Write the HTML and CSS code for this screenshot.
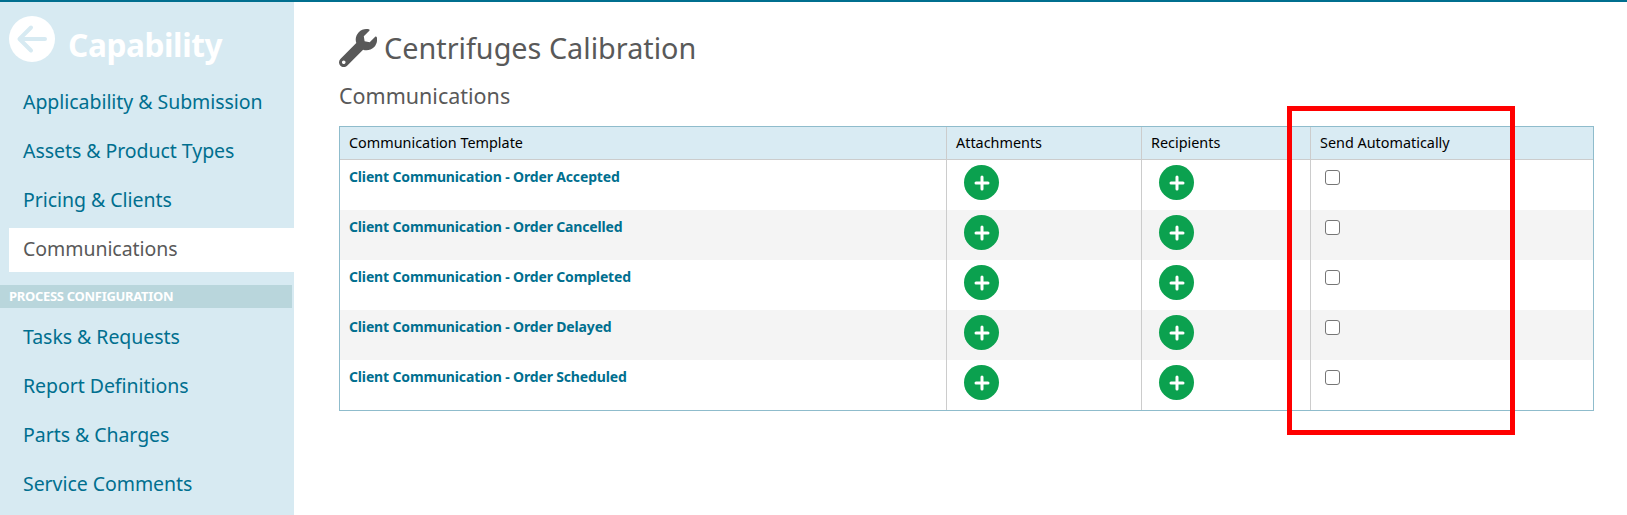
FILE: index.html
```html
<!DOCTYPE html>
<html lang="en">
<head>
<meta charset="utf-8">
<title>Centrifuges Calibration</title>
<link rel="stylesheet" href="styles.css">
</head>
<body>
<div class="layout">
  <aside class="sidebar">
    <div class="brand">
      <span class="back"><svg viewBox="0 0 46 46" width="46" height="46"><path d="M36 23H11M22 11.500 10.500 23 22 34.500" fill="none" stroke="#d7eaf2" stroke-width="4" stroke-linecap="round" stroke-linejoin="round"/></svg></span>
      <span class="brand-name">Capability</span>
    </div>
    <nav class="nav">
      <a class="nav-item">Applicability &amp; Submission</a>
      <a class="nav-item">Assets &amp; Product Types</a>
      <a class="nav-item">Pricing &amp; Clients</a>
      <a class="nav-item active">Communications</a>
      <div class="nav-section">PROCESS CONFIGURATION</div>
      <a class="nav-item">Tasks &amp; Requests</a>
      <a class="nav-item">Report Definitions</a>
      <a class="nav-item">Parts &amp; Charges</a>
      <a class="nav-item">Service Comments</a>
    </nav>
  </aside>
  <main class="main">
    <h1 class="title">
      <svg class="wrench" viewBox="0 0 512 512" width="38" height="38"><path fill="#595959" d="M507.700 109.100c-2.200-9-13.500-12.100-20.100-5.500l-74.400 74.400-67.900-11.300-11.300-67.900 74.400-74.400c6.600-6.600 3.400-17.900-5.700-20.200-47.400-11.700-99.500 1-136.500 38-39.600 39.600-50.500 96.900-33.500 146.500L18.700 404.700c-25 25-25 65.500 0 90.500s65.500 25 90.500 0l215.300-215.300c49.700 16.600 106.900 5.700 146.300-33.700 37.100-37.100 49.800-89.300 37.900-137.100zM64 472c-13.300 0-24-10.700-24-24 0-13.300 10.700-24 24-24s24 10.700 24 24c0 13.300-10.700 24-24 24z"/></svg>
      <span>Centrifuges Calibration</span>
    </h1>
    <h2 class="subtitle">Communications</h2>
    <table class="grid">
      <colgroup><col class="c1"><col class="c2"><col class="c3"><col class="c4"></colgroup>
      <thead>
        <tr><th>Communication Template</th><th>Attachments</th><th>Recipients</th><th>Send Automatically</th></tr>
      </thead>
      <tbody>
        <tr>
          <td><a class="link">Client Communication - Order Accepted</a></td>
          <td><span class="add"><svg viewBox="0 0 16 16" width="16" height="16"><path d="M8 2v12M2 8h12" stroke="#fff" stroke-width="3" stroke-linecap="round"/></svg></span></td>
          <td><span class="add"><svg viewBox="0 0 16 16" width="16" height="16"><path d="M8 2v12M2 8h12" stroke="#fff" stroke-width="3" stroke-linecap="round"/></svg></span></td>
          <td><input class="check" type="checkbox"></td>
        </tr>
        <tr>
          <td><a class="link">Client Communication - Order Cancelled</a></td>
          <td><span class="add"><svg viewBox="0 0 16 16" width="16" height="16"><path d="M8 2v12M2 8h12" stroke="#fff" stroke-width="3" stroke-linecap="round"/></svg></span></td>
          <td><span class="add"><svg viewBox="0 0 16 16" width="16" height="16"><path d="M8 2v12M2 8h12" stroke="#fff" stroke-width="3" stroke-linecap="round"/></svg></span></td>
          <td><input class="check" type="checkbox"></td>
        </tr>
        <tr>
          <td><a class="link">Client Communication - Order Completed</a></td>
          <td><span class="add"><svg viewBox="0 0 16 16" width="16" height="16"><path d="M8 2v12M2 8h12" stroke="#fff" stroke-width="3" stroke-linecap="round"/></svg></span></td>
          <td><span class="add"><svg viewBox="0 0 16 16" width="16" height="16"><path d="M8 2v12M2 8h12" stroke="#fff" stroke-width="3" stroke-linecap="round"/></svg></span></td>
          <td><input class="check" type="checkbox"></td>
        </tr>
        <tr>
          <td><a class="link">Client Communication - Order Delayed</a></td>
          <td><span class="add"><svg viewBox="0 0 16 16" width="16" height="16"><path d="M8 2v12M2 8h12" stroke="#fff" stroke-width="3" stroke-linecap="round"/></svg></span></td>
          <td><span class="add"><svg viewBox="0 0 16 16" width="16" height="16"><path d="M8 2v12M2 8h12" stroke="#fff" stroke-width="3" stroke-linecap="round"/></svg></span></td>
          <td><input class="check" type="checkbox"></td>
        </tr>
        <tr>
          <td><a class="link">Client Communication - Order Scheduled</a></td>
          <td><span class="add"><svg viewBox="0 0 16 16" width="16" height="16"><path d="M8 2v12M2 8h12" stroke="#fff" stroke-width="3" stroke-linecap="round"/></svg></span></td>
          <td><span class="add"><svg viewBox="0 0 16 16" width="16" height="16"><path d="M8 2v12M2 8h12" stroke="#fff" stroke-width="3" stroke-linecap="round"/></svg></span></td>
          <td><input class="check" type="checkbox"></td>
        </tr>
      </tbody>
    </table>
  </main>
</div>
<div class="highlight"></div>
</body>
</html>
```

FILE: styles.css
```css
* { box-sizing: border-box; }
html, body { margin: 0; height: 100%; }
body {
  background: #fff;
  font-family: "Noto Sans", "Open Sans", sans-serif;
  border-top: 2px solid #006f8f;
  position: relative;
  overflow: hidden;
}
.layout { display: flex; height: 513px; }

.sidebar { width: 294px; flex: none; background: #d7eaf2; }
.brand { display: flex; align-items: flex-start; gap: 13px; height: 75px; padding: 14px 0 0 9px; }
.back {
  width: 46px; height: 46px; border-radius: 50%; background: #fff; flex: none;
}
.back svg { display: block; }
.brand-name { font-size: 31.600px; font-weight: 700; color: #fff; line-height: 1; margin-top: 13px; letter-spacing: -.4px; }

.nav { display: flex; flex-direction: column; }
.nav-item {
  display: flex; align-items: center;
  height: 49px; padding-left: 23px;
  font-size: 19.500px; color: #006f8f; letter-spacing: -.05px;
}
.nav-item.active {
  height: 44px; margin: 4px 0 0 9px; padding: 0 0 3px 14px;
  background: #fff; color: #595959;
}
.nav-section {
  height: 23px; width: 292px; margin: 13px 0 4px;
  padding-left: 9px;
  background: #b9d6dc; color: #fff;
  font-size: 13px; font-weight: 700; line-height: 23px; letter-spacing: -.3px;
}

.main { flex: 1; padding: 22px 33px 0 45px; color: #595959; }
.title {
  display: flex; align-items: center; gap: 7px;
  margin: 0; height: 48px;
  font-size: 28.800px; font-weight: 400; line-height: 48px;
}
.wrench { flex: none; }
.subtitle { margin: 10px 0 0; font-size: 21.500px; font-weight: 400; line-height: 28px; }

.grid {
  width: 1255px; margin-top: 16px;
  table-layout: fixed; border-collapse: separate; border-spacing: 0;
  border: 1px solid #8fbccc;
  font-size: 14.400px;
}
.c1 { width: 606px; }
.c2 { width: 195px; }
.c3 { width: 169px; }
.grid th {
  height: 33px; padding: 0 9px 2px;
  background: #d9ebf3; color: #000;
  font-weight: 400; text-align: left;
  border-left: 1px solid #ccc; border-bottom: 1px solid #ccc;
}
.grid td {
  height: 50px; padding: 0 9px;
  vertical-align: top;
  border-left: 1px solid #ccc;
}
.grid th:first-child, .grid td:first-child { border-left: 0; }
.grid tbody tr:nth-child(even) td { background: #f4f4f4; }
.link { display: block; margin-top: 7px; color: #006f8f; font-weight: 700; font-size: 14px; letter-spacing: -.15px; }
.add {
  display: flex; align-items: center; justify-content: center;
  width: 35px; height: 35px; border-radius: 50%;
  margin: 5px 0 0 8px;
  background: #0ba14f;
}
.check {
  appearance: none; display: block;
  width: 15px; height: 15px; margin: 10px 0 0 5px;
  background: #fff; border: 1px solid #767676; border-radius: 3px;
}
.highlight {
  position: absolute; left: 1287px; top: 104px;
  width: 228px; height: 329px;
  border: 5px solid #f00;
}
```
